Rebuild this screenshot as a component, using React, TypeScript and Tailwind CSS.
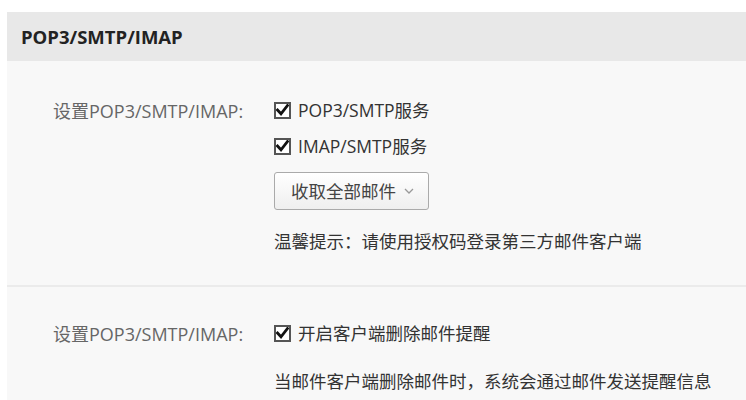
import React from 'react';

const Check: React.FC<{ label: string }> = ({ label }) => (
  <label className="flex items-center h-[20px]">
    <span className="w-[17px] h-[17px] border-2 border-[#555] bg-white flex items-center justify-center">
      <svg width="13" height="12" viewBox="0 0 13 12">
        <path d="M1.5 6 L5 9.8 L11.5 1.5" fill="none" stroke="#111" strokeWidth="2.8" strokeLinecap="square" />
      </svg>
    </span>
    <span className="ml-[7px] text-[17.5px] text-[#333]">{label}</span>
  </label>
);

export default function App() {
  return (
    <div className="w-[746px] h-[400px] bg-white pt-[12px] pl-[7px] overflow-hidden" style={{ fontFamily: '"Open Sans", "Noto Sans CJK SC", sans-serif' }}>
      <div className="bg-[#f8f8f8] h-full">
        <div className="h-[49px] bg-[#e8e8e8] flex items-center pl-[14px]">
          <h2 className="text-[18.5px] font-bold text-[#222]">POP3/SMTP/IMAP</h2>
        </div>

        <div className="flex pt-[39px] pb-[34px]">
          <div className="w-[267px] pl-[46px] text-[18px] text-[#666] leading-[20px] pt-[1px]">设置POP3/SMTP/IMAP:</div>
          <div className="flex flex-col">
            <Check label="POP3/SMTP服务" />
            <div className="mt-[16px]"><Check label="IMAP/SMTP服务" /></div>
            <button className="mt-[16px] w-[155px] h-[38px] border border-[#aaa] rounded-[3px] bg-gradient-to-b from-white to-[#efefef] flex items-center pl-[16px] text-[17.5px] text-[#444]">
              收取全部邮件
              <svg className="ml-[8px]" width="10" height="6" viewBox="0 0 10 6">
                <path d="M1 1 L5 5 L9 1" fill="none" stroke="#999" strokeWidth="1.3" />
              </svg>
            </button>
            <p className="mt-[21px] text-[17.5px] text-[#333] leading-[20px]">温馨提示：请使用授权码登录第三方邮件客户端</p>
          </div>
        </div>

        <div className="h-[2px] bg-[#ebebeb]" />

        <div className="flex pt-[36px]">
          <div className="w-[267px] pl-[46px] text-[18px] text-[#666] leading-[20px] pt-[1px]">设置POP3/SMTP/IMAP:</div>
          <div className="flex flex-col">
            <Check label="开启客户端删除邮件提醒" />
            <p className="mt-[28px] text-[17.5px] text-[#333] leading-[20px]">当邮件客户端删除邮件时，系统会通过邮件发送提醒信息</p>
          </div>
        </div>
      </div>
    </div>
  );
}
